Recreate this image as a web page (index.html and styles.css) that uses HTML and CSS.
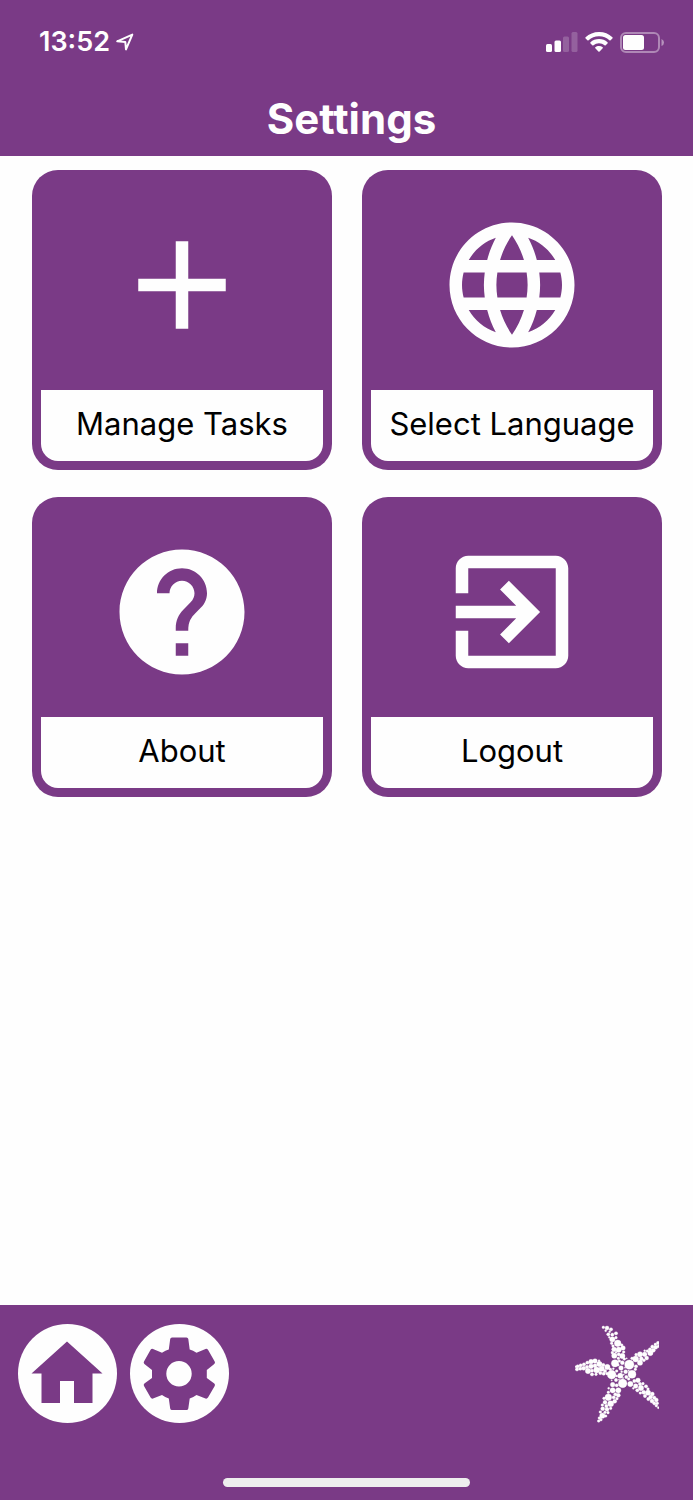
FILE: index.html
```html
<!DOCTYPE html>

<html lang="en">

<head>
    <meta charset="UTF-8">
    <meta name="viewport" content="width=device-width, initial-scale=1.0">
    <title>Settings</title>
    <link rel="stylesheet" href="styles.css">
</head>

<body>
    <header>
        <div class="status-bar">
            <span class="time">13:52</span>
            <svg class="location" viewBox="0 0 18 18" aria-hidden="true">
                <path d="M1.2 8.3 16.3 1.6 10 16.4 9.3 9Z" />
            </svg>
            <svg class="signal" viewBox="0 0 32 20" aria-hidden="true">
                <rect x="0" y="12" width="6" height="8" rx="1.5" />
                <rect x="8.5" y="8.5" width="6.5" height="11.5" rx="1.5" />
                <rect class="dim" x="17" y="4.5" width="6" height="15.5" rx="1.5" />
                <rect class="dim" x="25.5" y="0" width="6" height="20" rx="1.5" />
            </svg>
            <svg class="wifi" viewBox="0 0 28 20" aria-hidden="true">
                <path d="M14 0C8.8 0 4 2 .6 5.2q-.6.6 0 1.2l1.8 1.8q.6.5 1.2 0A15 15 0 0 1 14 4.2a15 15 0 0 1 10.4 4q.6.5 1.2 0l1.8-1.8q.6-.6 0-1.2A19.5 19.5 0 0 0 14 0Z" />
                <path d="M14 7C10.7 7 7.7 8.2 5.5 10.2q-.6.6 0 1.2l1.8 1.8q.6.5 1.2 0A8.3 8.3 0 0 1 14 11.2c2.1 0 4 .7 5.5 2q.6.5 1.2 0l1.8-1.8q.6-.6 0-1.2A12.5 12.5 0 0 0 14 7Z" />
                <path d="M14 14c-1.4 0-2.7.5-3.7 1.3q-.5.5 0 1l3.1 3.1q.6.5 1.2 0l3.1-3.1q.5-.5 0-1A5.9 5.9 0 0 0 14 14Z" />
            </svg>
            <svg class="battery" viewBox="0 0 44 21" aria-hidden="true">
                <rect class="shell" x="1" y="1" width="38" height="19" rx="5" />
                <rect x="3" y="3" width="21" height="15" rx="2.5" />
                <path class="cap" d="M41.5 7q2.5 1 2.5 3.5t-2.5 3.5Z" />
            </svg>
        </div>
        <h1>Settings</h1>
    </header>

    <main>
        <button type="button" class="tile">
            <span class="tile-icon">
                <svg viewBox="0 0 24 24" aria-hidden="true">
                    <path d="M19 13h-6v6h-2v-6H5v-2h6V5h2v6h6v2z" />
                </svg>
            </span>
            <span class="tile-label">Manage Tasks</span>
        </button>
        <button type="button" class="tile">
            <span class="tile-icon">
                <svg viewBox="0 0 24 24" aria-hidden="true">
                    <path d="M11.99 2C6.47 2 2 6.48 2 12s4.47 10 9.99 10C17.52 22 22 17.52 22 12S17.52 2 11.99 2zm6.93 6h-2.95c-.32-1.25-.78-2.45-1.38-3.56 1.84.63 3.37 1.91 4.33 3.56zM12 4.04c.83 1.2 1.48 2.53 1.91 3.96h-3.82c.43-1.43 1.08-2.76 1.91-3.96zM4.26 14C4.1 13.36 4 12.69 4 12s.1-1.36.26-2h3.38c-.08.66-.14 1.32-.14 2s.06 1.34.14 2H4.26zm.82 2h2.95c.32 1.25.78 2.45 1.38 3.56-1.84-.63-3.37-1.9-4.33-3.56zm2.95-8H5.08c.96-1.66 2.49-2.93 4.33-3.56C8.81 5.55 8.35 6.75 8.03 8zM12 19.96c-.83-1.2-1.48-2.53-1.91-3.96h3.82c-.43 1.43-1.08 2.76-1.91 3.96zM14.34 14H9.66c-.09-.66-.16-1.32-.16-2s.07-1.35.16-2h4.68c.09.65.16 1.32.16 2s-.07 1.34-.16 2zm.25 5.56c.6-1.11 1.06-2.31 1.38-3.56h2.95c-.96 1.65-2.49 2.93-4.33 3.56zM16.36 14c.08-.66.14-1.32.14-2s-.06-1.34-.14-2h3.38c.16.64.26 1.31.26 2s-.1 1.36-.26 2h-3.38z" />
                </svg>
            </span>
            <span class="tile-label">Select Language</span>
        </button>
        <button type="button" class="tile">
            <span class="tile-icon">
                <svg viewBox="0 0 24 24" aria-hidden="true">
                    <path d="M12 2C6.48 2 2 6.48 2 12s4.48 10 10 10 10-4.48 10-10S17.52 2 12 2zm1 17h-2v-2h2v2zm2.07-7.75l-.9.92C13.45 12.9 13 13.5 13 15h-2v-.5c0-1.1.45-2.1 1.17-2.83l1.24-1.26c.37-.36.59-.86.59-1.41 0-1.1-.9-2-2-2s-2 .9-2 2H8c0-2.21 1.79-4 4-4s4 1.79 4 4c0 .88-.36 1.68-.93 2.25z" />
                </svg>
            </span>
            <span class="tile-label">About</span>
        </button>
        <button type="button" class="tile">
            <span class="tile-icon">
                <svg viewBox="0 0 24 24" aria-hidden="true">
                    <path d="M10.09 15.59L11.5 17l5-5-5-5-1.41 1.41L12.67 11H3v2h9.67l-2.58 2.59zM19 3H5c-1.11 0-2 .9-2 2v4h2V5h14v14H5v-4H3v4c0 1.1.89 2 2 2h14c1.1 0 2-.9 2-2V5c0-1.1-.9-2-2-2z" />
                </svg>
            </span>
            <span class="tile-label">Logout</span>
        </button>
    </main>

    <footer>
        <nav>
            <a href="#home" class="nav-button" aria-label="Home">
                <svg viewBox="0 0 99 99" aria-hidden="true">
                    <path d="M49 17.5 84.5 49.5H74.5V79H56V57H42V79H23.5V49.5H13.5Z" />
                </svg>
            </a>
            <a href="#settings" class="nav-button" aria-label="Settings">
                <svg viewBox="0 0 99 99" aria-hidden="true">
                    <path fill-rule="evenodd" d="M42 13.5H56.5Q58 13.5 58.3 15L59.7 25.5Q63 26.5 66.5 28.8L75.5 25Q77 24.5 78 25.8L84.7 37.6Q85.5 39 84.3 40L76.8 46V54L84.3 59.5Q85.5 60.5 84.7 62L78 73.5Q77 75 75.5 74.5L66.5 71Q63 73.5 59.7 74.5L58.3 84.5Q58 86 56.5 86H42Q40.5 86 40.2 84.5L38.8 74.5Q35.5 73.5 32 71L23 74.5Q21.5 75 20.6 73.5L14 62Q13.2 60.5 14.4 59.5L22 54V46L14.4 40Q13.2 39 14 37.6L20.6 25.8Q21.5 24.5 23 25L32 28.8Q35.5 26.5 38.8 25.5L40.2 15Q40.5 13.5 42 13.5ZM49 37A12.7 12.7 0 1 0 49 62.4 12.7 12.7 0 1 0 49 37Z" />
                </svg>
            </a>
            <svg class="starfish" viewBox="30 30 252 294" role="img" aria-label="Starfish">
                <!-- body -->
                <circle cx="193" cy="149" r="14" />
                <circle cx="173" cy="205" r="13" />
                <circle cx="140" cy="179" r="13" />
                <circle cx="201" cy="178" r="12" />
                <circle cx="150" cy="145" r="11" />
                <circle cx="168" cy="159" r="7" />
                <circle cx="166" cy="182" r="8" />
                <circle cx="182" cy="170" r="6" />
                <circle cx="155" cy="168" r="4" />
                <circle cx="172" cy="143" r="6" />
                <circle cx="184" cy="186" r="5" />
                <circle cx="153" cy="195" r="5" />
                <circle cx="155" cy="183" r="3" />
                <circle cx="170" cy="170" r="3" />
                <circle cx="160" cy="150" r="3" />
                <circle cx="191" cy="192" r="4" />
                <circle cx="211" cy="163" r="4" />
                <circle cx="178" cy="132" r="4" />
                <circle cx="145" cy="161" r="3" />
                <circle cx="191" cy="167" r="2" />
                <circle cx="180" cy="158" r="2" />
                <circle cx="176" cy="179" r="2" />
                <circle cx="174" cy="189" r="2" />
                <circle cx="162" cy="194" r="2" />
                <circle cx="185" cy="130" r="2" />
                <circle cx="140" cy="196" r="2" />
                <!-- top arm -->
                <circle cx="115" cy="37" r="4" />
                <circle cx="126" cy="39" r="6" />
                <circle cx="138" cy="43" r="5" />
                <circle cx="122" cy="47" r="3" />
                <circle cx="134" cy="50" r="3" />
                <circle cx="130" cy="58" r="5" />
                <circle cx="142" cy="59" r="5" />
                <circle cx="153" cy="55" r="5" />
                <circle cx="133" cy="67" r="3" />
                <circle cx="142" cy="73" r="8" />
                <circle cx="153" cy="68" r="4" />
                <circle cx="158" cy="85" r="10" />
                <circle cx="140" cy="85" r="4" />
                <circle cx="144" cy="93" r="4" />
                <circle cx="170" cy="90" r="4" />
                <circle cx="147" cy="103" r="7" />
                <circle cx="161" cy="104" r="8" />
                <circle cx="174" cy="99" r="7" />
                <circle cx="142" cy="113" r="4" />
                <circle cx="153" cy="112" r="3" />
                <circle cx="148" cy="122" r="8" />
                <circle cx="161" cy="118" r="5" />
                <circle cx="172" cy="123" r="8" />
                <circle cx="176" cy="111" r="4" />
                <circle cx="160" cy="130" r="4" />
                <circle cx="163" cy="138" r="4" />
                <!-- right upper arm -->
                <circle cx="212" cy="132" r="9" />
                <circle cx="225" cy="118" r="8" />
                <circle cx="225" cy="143" r="8" />
                <circle cx="213" cy="154" r="5" />
                <circle cx="213" cy="119" r="4" />
                <circle cx="201" cy="130" r="4" />
                <circle cx="229" cy="131" r="6" />
                <circle cx="239" cy="118" r="7" />
                <circle cx="245" cy="129" r="6" />
                <circle cx="237" cy="136" r="4" />
                <circle cx="239" cy="107" r="3" />
                <circle cx="247" cy="108" r="4" />
                <circle cx="256" cy="114" r="8" />
                <circle cx="255" cy="103" r="5" />
                <circle cx="265" cy="106" r="6" />
                <circle cx="262" cy="95" r="5" />
                <circle cx="272" cy="97" r="6" />
                <circle cx="271" cy="88" r="4" />
                <circle cx="279" cy="84" r="5" />
                <circle cx="280" cy="94" r="4" />
                <!-- right lower arm -->
                <circle cx="196" cy="207" r="8" />
                <circle cx="208" cy="198" r="5" />
                <circle cx="219" cy="196" r="7" />
                <circle cx="212" cy="213" r="7" />
                <circle cx="225" cy="207" r="5" />
                <circle cx="205" cy="220" r="3" />
                <circle cx="228" cy="219" r="8" />
                <circle cx="217" cy="226" r="5" />
                <circle cx="234" cy="206" r="4" />
                <circle cx="243" cy="214" r="5" />
                <circle cx="236" cy="232" r="6" />
                <circle cx="226" cy="234" r="4" />
                <circle cx="249" cy="233" r="8" />
                <circle cx="249" cy="222" r="4" />
                <circle cx="240" cy="243" r="5" />
                <circle cx="257" cy="246" r="6" />
                <circle cx="262" cy="237" r="6" />
                <circle cx="250" cy="252" r="5" />
                <circle cx="268" cy="248" r="5" />
                <circle cx="261" cy="258" r="6" />
                <circle cx="274" cy="255" r="6" />
                <circle cx="268" cy="265" r="5" />
                <circle cx="277" cy="265" r="4" />
                <circle cx="274" cy="272" r="4" />
                <circle cx="280" cy="278" r="3" />
                <!-- bottom arm -->
                <circle cx="143" cy="209" r="7" />
                <circle cx="155" cy="211" r="5" />
                <circle cx="143" cy="226" r="8" />
                <circle cx="160" cy="226" r="8" />
                <circle cx="131" cy="220" r="3" />
                <circle cx="130" cy="232" r="4" />
                <circle cx="130" cy="247" r="10" />
                <circle cx="151" cy="238" r="5" />
                <circle cx="160" cy="241" r="6" />
                <circle cx="146" cy="247" r="5" />
                <circle cx="156" cy="251" r="4" />
                <circle cx="117" cy="250" r="4" />
                <circle cx="149" cy="259" r="6" />
                <circle cx="120" cy="262" r="6" />
                <circle cx="137" cy="266" r="9" />
                <circle cx="112" cy="270" r="4" />
                <circle cx="124" cy="273" r="5" />
                <circle cx="113" cy="281" r="6" />
                <circle cx="126" cy="283" r="6" />
                <circle cx="137" cy="280" r="4" />
                <circle cx="106" cy="291" r="4" />
                <circle cx="120" cy="292" r="4" />
                <circle cx="129" cy="293" r="4" />
                <circle cx="112" cy="302" r="8" />
                <circle cx="122" cy="303" r="4" />
                <circle cx="103" cy="309" r="4" />
                <circle cx="108" cy="314" r="4" />
                <circle cx="101" cy="318" r="4" />
                <!-- left arm -->
                <circle cx="127" cy="156" r="8" />
                <circle cx="136" cy="163" r="4" />
                <circle cx="120" cy="168" r="5" />
                <circle cx="126" cy="176" r="4" />
                <circle cx="110" cy="161" r="8" />
                <circle cx="103" cy="147" r="8" />
                <circle cx="115" cy="150" r="5" />
                <circle cx="116" cy="176" r="5" />
                <circle cx="95" cy="165" r="9" />
                <circle cx="106" cy="174" r="5" />
                <circle cx="90" cy="138" r="7" />
                <circle cx="90" cy="152" r="6" />
                <circle cx="102" cy="137" r="3" />
                <circle cx="78" cy="140" r="7" />
                <circle cx="78" cy="154" r="7" />
                <circle cx="69" cy="168" r="8" />
                <circle cx="81" cy="167" r="5" />
                <circle cx="81" cy="178" r="5" />
                <circle cx="93" cy="178" r="4" />
                <circle cx="67" cy="143" r="5" />
                <circle cx="66" cy="156" r="5" />
                <circle cx="57" cy="148" r="5" />
                <circle cx="56" cy="160" r="6" />
                <circle cx="47" cy="151" r="5" />
                <circle cx="46" cy="161" r="5" />
                <circle cx="38" cy="154" r="5" />
                <circle cx="36" cy="163" r="5" />
                <circle cx="33" cy="155" r="3" />
            </svg>
        </nav>
        <div class="home-indicator"></div>
    </footer>
</body>

</html>
```
FILE: styles.css
```css
:root {
    --purple: #7A3A86;
    --white: #FEFEFE;
    --black: #000000;
}

* {
    box-sizing: border-box;
}

body {
    font-family: Inter, "Liberation Sans", sans-serif;
    margin: 0;
    min-height: 100vh;
    display: flex;
    flex-direction: column;
    background-color: var(--white);
    color: var(--black);
}

svg {
    display: block;
    fill: currentColor;
}

header {
    background-color: var(--purple);
    color: var(--white);
    padding: 24px 29px 11px 39px;
}

.status-bar {
    display: flex;
    align-items: center;
    height: 36px;
}

.time {
    font-size: 27px;
    font-weight: 600;
    line-height: 36px;
}

.location {
    width: 18px;
    height: 18px;
    margin-left: 6px;
    fill: none;
    stroke: currentColor;
    stroke-width: 2;
    stroke-linejoin: round;
}

.signal {
    width: 32px;
    height: 20px;
    margin-left: auto;
}

.wifi {
    width: 28px;
    height: 20px;
    margin: 0 7px;
}

.battery {
    width: 44px;
    height: 21px;
}

.dim {
    opacity: 0.2;
}

.shell {
    fill: none;
    stroke: currentColor;
    stroke-width: 2;
    opacity: 0.4;
}

.cap {
    opacity: 0.45;
}

h1 {
    margin: 33px 0 0;
    font-size: 42px;
    font-weight: 700;
    line-height: 52px;
    text-align: center;
}

main {
    flex: 1;
    display: grid;
    grid-template-columns: 1fr 1fr;
    align-content: start;
    gap: 27px 30px;
    padding: 14px 31px 14px 32px;
}

.tile {
    display: flex;
    flex-direction: column;
    aspect-ratio: 1;
    min-width: 0;
    padding: 9px;
    border: 0;
    border-radius: 26px;
    background-color: var(--purple);
    font-family: inherit;
    cursor: pointer;
}

.tile-icon {
    flex: 1;
    display: flex;
    align-items: center;
    justify-content: center;
    align-self: stretch;
    color: var(--white);
}

.tile-icon svg {
    width: 150px;
    height: 150px;
}

.tile-label {
    align-self: stretch;
    padding: 12px 0 15px;
    border-radius: 0 0 17px 17px;
    background-color: var(--white);
    color: var(--black);
    font-size: 31px;
    line-height: 44px;
    text-align: center;
    white-space: nowrap;
}

footer {
    display: grid;
    background-color: var(--purple);
    color: var(--white);
    padding: 19px 34px 13px 18px;
}

nav {
    display: flex;
    align-items: center;
    gap: 13px;
}

.nav-button {
    width: 99px;
    height: 99px;
    border-radius: 50%;
    background-color: var(--white);
    color: var(--purple);
}

.starfish {
    width: 84px;
    height: 98px;
    margin-left: auto;
    stroke: currentColor;
    stroke-width: 1;
}

.home-indicator {
    justify-self: center;
    width: 247px;
    max-width: 100%;
    height: 9px;
    margin: 55px -16px 0 0;
    border-radius: 5px;
    background-color: #EEEEEE;
}
```
